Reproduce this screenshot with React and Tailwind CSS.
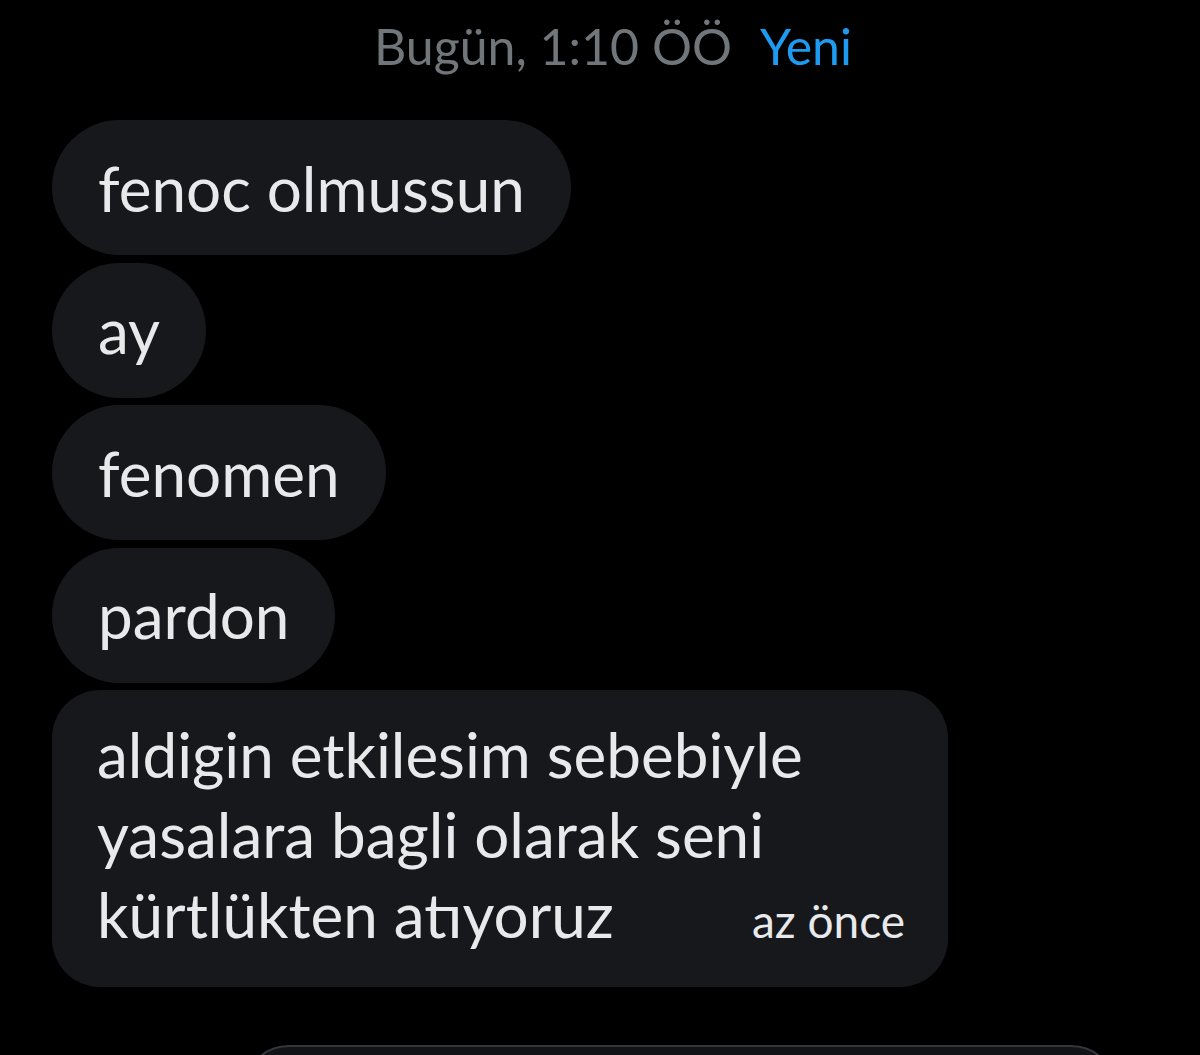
import React from "react";

const bubbleText = "text-[62px] leading-[80px] text-[#e7e9ea]";

function Bubble({ children }) {
  return (
    <div className={`rounded-full bg-[#16181c] px-[46px] py-[27.5px] ${bubbleText}`}>
      {children}
    </div>
  );
}

export default function App() {
  return (
    <div className="h-[1055px] w-[1200px] overflow-hidden bg-black font-['Lato',sans-serif]">
      {/* Date divider */}
      <div className="mt-[16px] flex justify-center gap-[28px] pl-[26px] text-[50px] leading-[60px]">
        <span className="text-[#71767b]">Bugün, 1:10 ÖÖ</span>
        <span className="text-[#1d9bf0]">Yeni</span>
      </div>

      {/* Messages */}
      <div className="mt-[44px] flex flex-col items-start gap-[7.5px] pl-[52px]">
        <Bubble>fenoc olmussun</Bubble>
        <Bubble>ay</Bubble>
        <Bubble>fenomen</Bubble>
        <Bubble>pardon</Bubble>

        <div className={`w-[896px] rounded-[48px] bg-[#16181c] pl-[45px] pr-[43px] pt-[24px] pb-[26px] ${bubbleText}`}>
          <div>aldigin etkilesim sebebiyle</div>
          <div>yasalara bagli olarak seni</div>
          <div className="flex items-baseline justify-between">
            <span>kürtlükten atıyoruz</span>
            <span className="text-[46px]">az önce</span>
          </div>
        </div>
      </div>

      {/* Composer */}
      <div className="ml-[243px] mt-[58px] h-[60px] w-[874px] rounded-t-[46px] border-2 border-[#35383b] bg-[#121316]" />
    </div>
  );
}
